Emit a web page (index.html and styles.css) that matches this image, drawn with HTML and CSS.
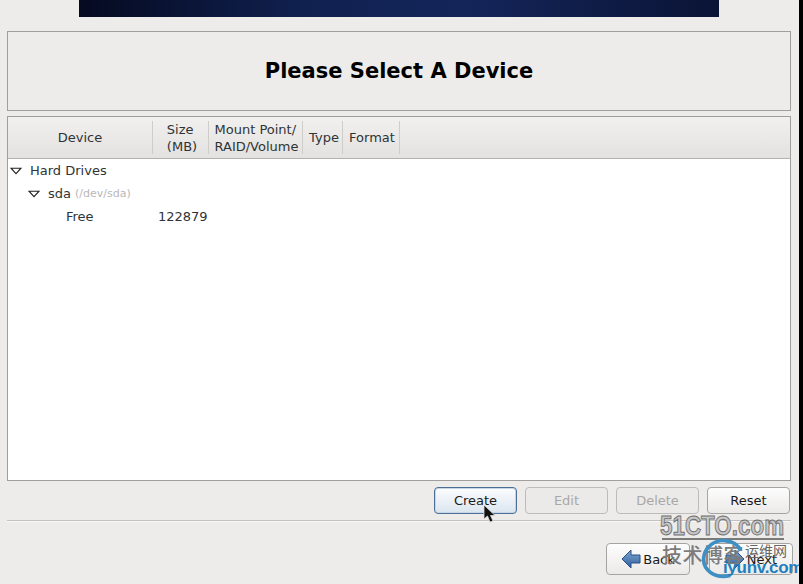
FILE: index.html
```html
<!DOCTYPE html>
<html lang="en">
<head>
<meta charset="utf-8">
<title>Please Select A Device</title>
<link rel="stylesheet" href="styles.css">
</head>
<body>
<div class="page">
  <div class="banner"></div>
  <div class="title-frame"><h1>Please Select A Device</h1></div>
  <div class="table-frame">
    <div class="thead">
      <div class="th c-device">Device</div>
      <div class="th c-size"><span>Size<br>(MB)</span></div>
      <div class="th c-mount"><span>Mount Point/<br>RAID/Volume</span></div>
      <div class="th c-type">Type</div>
      <div class="th c-format">Format</div>
    </div>
    <div class="tbody">
      <div class="row lvl0">
        <svg class="arrow" viewBox="0 0 12 8"><path d="M1 1.200H11L6 6.600Z" fill="#fff" stroke="#222" stroke-width="1.100"/></svg>
        <span>Hard Drives</span>
      </div>
      <div class="row lvl1">
        <svg class="arrow" viewBox="0 0 12 8"><path d="M1 1.200H11L6 6.600Z" fill="#fff" stroke="#222" stroke-width="1.100"/></svg>
        <span>sda</span><span class="dim">(/dev/sda)</span>
      </div>
      <div class="row lvl2">
        <span class="free">Free</span><span>122879</span>
      </div>
    </div>
  </div>
  <div class="actions">
    <button class="btn focus">Create</button>
    <button class="btn" disabled>Edit</button>
    <button class="btn" disabled>Delete</button>
    <button class="btn">Reset</button>
  </div>
  <div class="sep"></div>
  <div class="nav">
    <button class="btn nav-btn">
      <svg class="nav-ico" viewBox="0 0 20 20"><defs><linearGradient id="ar" x1="0" y1="0" x2="0" y2="1"><stop offset="0" stop-color="#7fa6d2"/><stop offset="1" stop-color="#2f5f9c"/></linearGradient></defs><path d="M1 10 10 1V6H19V14H10V19Z" fill="url(#ar)" stroke="#24508a"/></svg>Back
    </button>
    <button class="btn nav-btn">
      <svg class="nav-ico" viewBox="0 0 20 20"><path d="M19 10 10 1V6H1V14H10V19Z" fill="url(#ar)" stroke="#24508a"/></svg>Next
    </button>
  </div>
  <svg class="cursor" viewBox="0 0 14 20"><path d="M1 1V15L4.500 12 7 18 10 17 7.500 11.500H12Z" fill="#111" stroke="#ddd" stroke-width=".8"/></svg>
  <div class="wm">
    <div class="wm-51">51CTO.com</div>
    <div class="wm-bar"></div>
    <div class="wm-cn">技术博客</div>
    <svg class="wm-ring" viewBox="0 0 50 44"><path d="M33 40C16 44 3 34 4 21 5 9 16 1 27 2 36 3 42 7 44 13" fill="none" stroke="#3d8fc4" stroke-width="4"/></svg>
    <div class="wm-yw">运维网</div>
    <div class="wm-iy">iyunv.com</div>
  </div>
</div>
</body>
</html>
```

FILE: styles.css
```css
* { box-sizing: border-box; }
html, body { margin: 0; padding: 0; }
body { background: #edeceb; overflow: hidden; font-family: "DejaVu Sans", sans-serif; font-size: 13px; color: #2e3436; }
.page { position: relative; width: 803px; height: 584px; padding: 0 8px 0 7px; border-right: 4px solid #000; overflow: hidden; }
.banner { width: 640px; height: 17px; margin: 0 0 14px 72px; background: linear-gradient(90deg, #050a20 0%, #10204f 35%, #14255a 60%, #0a1435 100%); }
.title-frame { height: 80px; border: 1px solid #a09f9c; display: flex; align-items: center; justify-content: center; }
h1 { margin: 0; font-size: 21px; line-height: 26px; font-weight: 700; color: #000; }
.table-frame { height: 365px; margin-top: 5px; border: 1px solid #a09f9c; background: #fff; display: flex; flex-direction: column; }
.thead { height: 42px; flex: none; display: flex; background: linear-gradient(#f1f0ef, #e4e2e0); border-bottom: 1px solid #b3b2af; padding: 4px 0; }
.th { text-align: left; line-height: 17px; display: flex; align-items: center; justify-content: center; border-right: 1px solid #cfcdca; white-space: nowrap; }
.c-device { width: 145px; }
.c-size { width: 56px; padding-left: 3px; }
.c-mount { width: 94px; padding-left: 2px; }
.c-type { width: 40px; padding-left: 3px; }
.c-format { width: 57px; padding-left: 2px; }
.row { height: 23px; display: flex; align-items: center; white-space: nowrap; }
.arrow { width: 12px; height: 8px; flex: none; }
.lvl0 { padding-left: 2px; }
.lvl0 .arrow { margin-right: 8px; }
.lvl1 { padding-left: 20px; }
.lvl1 .arrow { margin-right: 8px; }
.dim { margin-left: 4px; font-size: 11px; color: #b8b8b8; }
.lvl2 { padding-left: 58px; }
.free { width: 92px; }
.actions { display: flex; justify-content: flex-end; gap: 8px; margin-top: 6px; padding-right: 1px; }
.btn { width: 83px; height: 27px; padding: 0; font: inherit; color: #1a1a1a; border: 1px solid #a5a4a1; border-radius: 4px; background: linear-gradient(#fdfdfd, #eceae8); display: inline-flex; align-items: center; justify-content: center; }
.btn:disabled { color: #a9a8a6; background: #eceae8; border-color: #bdbcb9; }
.btn.focus { border-color: #4d6f96; background: linear-gradient(#fcfdfe, #dbe5ef); box-shadow: inset 0 0 0 1px #c7d6e6; }
.sep { height: 2px; margin-top: 6px; border-top: 1px solid #c3c2bf; border-bottom: 1px solid #f8f8f7; }
.nav { display: flex; justify-content: flex-end; gap: 19px; margin-top: 21px; margin-right: -2px; }
.nav-btn { width: 84px; height: 32px; gap: 2px; }
.nav-ico { width: 20px; height: 20px; flex: none; }
.cursor { position: absolute; left: 483px; top: 504px; width: 14px; height: 20px; }
.wm { position: absolute; left: 640px; top: 505px; width: 159px; height: 79px; }
.wm-51 { position: absolute; left: 20px; top: 6px; font: 700 28px/30px "Liberation Sans", sans-serif; color: #c6c6c6; -webkit-text-stroke: 1px #6f6f6f; white-space: nowrap; transform: scaleX(.8); transform-origin: left center; }
.wm-bar { position: absolute; left: 22px; top: 33px; width: 122px; height: 2px; background: #7a7a7a; }
.wm-cn { position: absolute; left: 22px; top: 37px; font: 500 20px/26px "Noto Sans CJK SC", sans-serif; letter-spacing: .5px; color: #7c7c7c; white-space: nowrap; }
.wm-ring { position: absolute; left: 60px; top: 33px; width: 46px; height: 42px; }
.wm-yw { position: absolute; left: 105px; top: 36px; font: 400 14px/18px "Noto Sans CJK SC", sans-serif; color: #666; white-space: nowrap; }
.wm-iy { position: absolute; left: 83px; top: 52px; font: 700 17px/22px "Liberation Sans", sans-serif; letter-spacing: -.3px; color: #1f7fc0; white-space: nowrap; }
```
